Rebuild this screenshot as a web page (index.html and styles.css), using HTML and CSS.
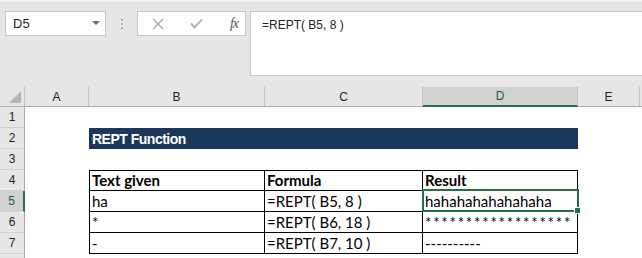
FILE: index.html
```html
<!DOCTYPE html>
<html lang="en">
<head>
    <meta charset="UTF-8">
    <title>REPT Function</title>
    <link rel="stylesheet" href="styles.css">
</head>
<body>
    <div class="toolbar">
        <div class="namebox">
            <span>D5</span>
            <span class="caret"></span>
        </div>
        <div class="grip"><i></i><i></i><i></i></div>
        <div class="fnbox">
            <svg width="12" height="12" viewBox="0 0 12 12"><path d="M1 1L11 11M11 1L1 11" stroke="#a8a8a8" stroke-width="1.3" fill="none"/></svg>
            <svg width="13" height="11" viewBox="0 0 13 11"><path d="M1 5.5L4.5 9.5L12 1.5" stroke="#b4b4b4" stroke-width="2" fill="none"/></svg>
            <span class="fx">fx</span>
        </div>
        <div class="formula">=REPT( B5, 8 )</div>
    </div>

    <div class="sheet">
        <div class="corner"><span class="tri"></span></div>
        <div class="colhead">A</div>
        <div class="colhead">B</div>
        <div class="colhead">C</div>
        <div class="colhead active">D</div>
        <div class="colhead">E</div>
        <div class="colhead tail"></div>

        <!-- row 1 -->
        <div class="rowhead">1</div>
        <div class="cell"></div><div class="cell"></div><div class="cell"></div><div class="cell"></div><div class="cell"></div><div class="cell"></div>

        <!-- row 2 -->
        <div class="rowhead">2</div>
        <div class="cell"></div>
        <div class="band">REPT Function</div>
        <div class="cell"></div><div class="cell"></div>

        <!-- row 3 -->
        <div class="rowhead">3</div>
        <div class="cell"></div><div class="cell"></div><div class="cell"></div><div class="cell"></div><div class="cell"></div><div class="cell"></div>

        <!-- row 4 -->
        <div class="rowhead">4</div>
        <div class="cell"></div>
        <div class="cell t top first bold">Text given</div>
        <div class="cell t top bold">Formula</div>
        <div class="cell t top bold">Result</div>
        <div class="cell"></div><div class="cell"></div>

        <!-- row 5 -->
        <div class="rowhead active">5</div>
        <div class="cell"></div>
        <div class="cell t first">ha</div>
        <div class="cell t">=REPT( B5, 8 )</div>
        <div class="cell t selected">hahahahahahahaha</div>
        <div class="cell"></div><div class="cell"></div>

        <!-- row 6 -->
        <div class="rowhead">6</div>
        <div class="cell"></div>
        <div class="cell t first">*</div>
        <div class="cell t">=REPT( B6, 18 )</div>
        <div class="cell t stars">******************</div>
        <div class="cell"></div><div class="cell"></div>

        <!-- row 7 -->
        <div class="rowhead">7</div>
        <div class="cell"></div>
        <div class="cell t first">-</div>
        <div class="cell t">=REPT( B7, 10 )</div>
        <div class="cell t">----------</div>
        <div class="cell"></div><div class="cell"></div>

        <!-- row 8 -->
        <div class="rowhead"></div>
        <div class="cell"></div><div class="cell"></div><div class="cell"></div><div class="cell"></div><div class="cell"></div><div class="cell"></div>
    </div>
</body>
</html>
```

FILE: styles.css
```css
* {
    margin: 0;
    padding: 0;
    box-sizing: border-box;
}

body {
    font-family: 'Liberation Sans', Arial, sans-serif;
    background-color: #e6e6e6;
    color: #000;
    width: 642px;
    height: 258px;
    overflow: hidden;
}

/* formula bar area */
.toolbar {
    height: 87px;
    display: flex;
    align-items: flex-start;
    padding-top: 11px;
    border-top: 2px solid #f2f2f2;
}

.namebox {
    margin-top: -2px;
    margin-left: 5px;
    width: 101px;
    height: 25px;
    background-color: #fff;
    border: 1px solid #c6c6c6;
    display: flex;
    align-items: center;
    justify-content: space-between;
    padding: 0 5px 0 7px;
    font-size: 13px;
    color: #222;
}

.caret {
    width: 0;
    height: 0;
    border-left: 4px solid transparent;
    border-right: 4px solid transparent;
    border-top: 4px solid #6b6b6b;
    margin-bottom: 2px;
}

.grip {
    margin-top: 6px;
    width: 31px;
    display: flex;
    flex-direction: column;
    align-items: center;
    gap: 2px;
}

.grip i {
    width: 2px;
    height: 2px;
    background-color: #b3b3b3;
}

.fnbox {
    margin-top: -2px;
    width: 109px;
    height: 25px;
    background-color: #fff;
    border: 1px solid #c6c6c6;
    display: flex;
    align-items: center;
    padding: 0 7px 0 14px;
    justify-content: space-between;
}

.fx {
    font-family: 'Liberation Serif', serif;
    font-style: italic;
    font-size: 14px;
    color: #555;
    letter-spacing: -1px;
}

.formula {
    margin-top: -2px;
    margin-left: 4px;
    flex: 1;
    height: 65px;
    background-color: #fff;
    border: 1px solid #c6c6c6;
    border-right: none;
    padding: 6px 0 0 11px;
    font-size: 12px;
    color: #222;
}

/* grid */
.sheet {
    display: grid;
    grid-template-columns: 25px 64px 176px 158px 155px 62px 1fr;
    grid-template-rows: 20px repeat(8, 21px);
    background-color: #fff;
}

.corner {
    position: relative;
    background-color: #e6e6e6;
    border-right: 1px solid #c3c3c3;
    border-bottom: 1px solid #ababab;
}

.corner .tri {
    position: absolute;
    right: 3px;
    bottom: 3px;
    width: 0;
    height: 0;
    border-left: 12px solid transparent;
    border-bottom: 12px solid #b4b4b4;
}

.colhead {
    background-color: #e6e6e6;
    border-right: 1px solid #c3c3c3;
    border-bottom: 1px solid #ababab;
    display: flex;
    align-items: center;
    justify-content: center;
    font-size: 12px;
    color: #222;
}

.colhead.active {
    background-color: #d2d2d2;
    border-bottom: 2px solid #217346;
    color: #1e5a3a;
}

.colhead.tail {
    border-right: none;
}

.rowhead {
    background-color: #e6e6e6;
    border-right: 1px solid #ababab;
    border-bottom: 1px solid #d0d0d0;
    display: flex;
    align-items: center;
    justify-content: center;
    font-size: 12px;
    color: #222;
}

.rowhead.active {
    background-color: #d2d2d2;
    border-right: 2px solid #217346;
    color: #1e5a3a;
}

.cell {
    background-color: #fff;
}

.band {
    grid-column: 3 / 6;
    background-color: #1b375c;
    color: #fff;
    font-weight: bold;
    font-size: 14px;
    letter-spacing: -0.5px;
    display: flex;
    align-items: center;
    padding-left: 3px;
}

.cell.t {
    font-family: Lato, 'Liberation Sans', sans-serif;
    font-size: 15px;
    display: flex;
    align-items: flex-end;
    padding: 0 0 1px 2px;
    border-right: 1px solid #000;
    border-bottom: 1px solid #000;
    white-space: nowrap;
}

.cell.stars {
    letter-spacing: 1.8px;
}

.cell.top {
    border-top: 1px solid #000;
}

.cell.first {
    border-left: 1px solid #000;
}

.bold {
    font-weight: bold;
}

.selected {
    position: relative;
}

.selected::after {
    content: '';
    position: absolute;
    left: -1px;
    top: -2px;
    right: -2px;
    bottom: -1px;
    border: 2px solid #217346;
}

.selected::before {
    content: '';
    position: absolute;
    right: -4px;
    bottom: -3px;
    width: 5px;
    height: 5px;
    background-color: #217346;
    border: 1px solid #fff;
    z-index: 1;
}
```
